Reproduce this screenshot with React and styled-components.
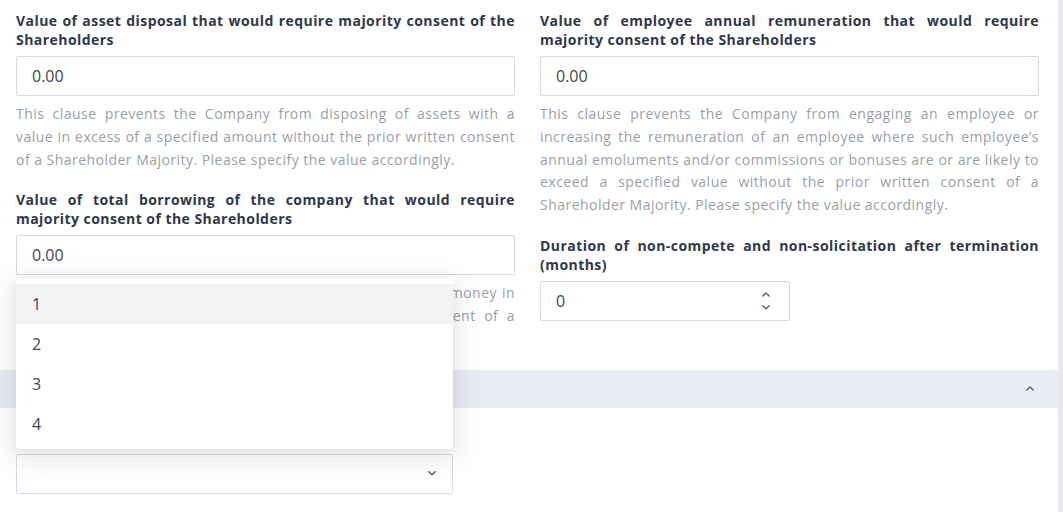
import React from 'react';
import styled, { createGlobalStyle } from 'styled-components';

const Global = createGlobalStyle`
  html, body { margin: 0; padding: 0; background: #fff; }
  body { font-family: "Open Sans", "Noto Sans", sans-serif; }
  * { box-sizing: border-box; }
`;

const Page = styled.div`
  display: flex;
  width: 1063px;
  height: 512px;
  overflow: hidden;
  background: #fff;
`;

const Main = styled.div`
  flex: 1;
  min-width: 0;
  display: flex;
  flex-direction: column;
`;

const ScrollTrack = styled.div`
  width: 5px;
  flex: none;
  background: #e6e8ed;
`;

const Grid = styled.div`
  display: grid;
  grid-template-columns: 499px 499px;
  column-gap: 25px;
  padding: 11px 19px 19px 16px;
  align-items: start;
`;

const Column = styled.div`
  display: flex;
  flex-direction: column;
  gap: 19px;
`;

const Field = styled.div`
  display: flex;
  flex-direction: column;
`;

const Label = styled.label`
  font-size: 14px;
  font-weight: 700;
  line-height: 19px;
  letter-spacing: 0.45px;
  color: #2f384a;
  text-align: justify;
  margin-bottom: 7px;
`;

const TextInput = styled.div`
  height: 40px;
  width: ${(p) => p.$width || '100%'};
  border: 1px solid #d3dbe6;
  border-radius: 2px;
  padding: 0 15px;
  display: flex;
  align-items: center;
  justify-content: space-between;
  font-size: 16px;
  color: #3f4654;
  background: #fff;
`;

const Help = styled.p`
  margin: 7px 0 0;
  font-size: 14px;
  line-height: 22.75px;
  letter-spacing: 0.47px;
  color: #9a9fa7;
  text-align: justify;
`;

const Spinner = styled.div`
  display: flex;
  flex-direction: column;
  align-items: center;
  gap: 8px;
  margin-right: 4px;
`;

const Band = styled.div`
  height: 38px;
  background: #e9ecf4;
  display: flex;
  align-items: center;
  justify-content: flex-end;
  padding-right: 24px;
`;

const Section = styled.div`
  padding: 46px 0 0 16px;
`;

const SelectWrap = styled.div`
  position: relative;
  width: 437px;
`;

const SelectBox = styled.div`
  height: 40px;
  border: 1px solid #d3dbe6;
  border-radius: 2px;
  display: flex;
  align-items: center;
  justify-content: flex-end;
  padding-right: 16px;
  background: #fff;
`;

const Menu = styled.ul`
  position: absolute;
  left: 0;
  right: 0;
  bottom: calc(100% + 5px);
  margin: 0;
  padding: 5px 0;
  list-style: none;
  background: #fff;
  border-radius: 4px;
  box-shadow: 0 6px 28px 6px rgba(0, 0, 0, 0.09), 0 2px 6px rgba(0, 0, 0, 0.06);
  z-index: 10;
`;

const Option = styled.li`
  height: 40px;
  padding-left: 16px;
  display: flex;
  align-items: center;
  font-size: 16px;
  color: #3f4654;
  background: ${(p) => (p.$active ? '#f3f3f3' : '#fff')};
`;

const Chevron = ({ up, size = 9 }) => (
  <svg width={size} height={size * 0.6} viewBox="0 0 10 6" fill="none">
    <path
      d={up ? 'M1 5 L5 1.2 L9 5' : 'M1 1 L5 4.8 L9 1'}
      stroke="#56637f"
      strokeWidth="1.8"
      strokeLinecap="round"
      strokeLinejoin="round"
    />
  </svg>
);

export default function App() {
  return (
    <>
      <Global />
      <Page>
        <Main>
          <Grid>
            <Column>
              <Field>
                <Label>Value of asset disposal that would require majority consent of the Shareholders</Label>
                <TextInput>0.00</TextInput>
                <Help>
                  This clause prevents the Company from disposing of assets with a value in excess of a specified
                  amount without the prior written consent of a Shareholder Majority. Please specify the value
                  accordingly.
                </Help>
              </Field>
              <Field>
                <Label>Value of total borrowing of the company that would require majority consent of the Shareholders</Label>
                <TextInput>0.00</TextInput>
                <Help>
                  This clause prevents the Company from borrowing or raising money in excess of a specified value
                  without the prior written consent of a Shareholder Majority. Please specify the value accordingly.
                </Help>
              </Field>
            </Column>
            <Column>
              <Field>
                <Label>Value of employee annual remuneration that would require majority consent of the Shareholders</Label>
                <TextInput>0.00</TextInput>
                <Help>
                  This clause prevents the Company from engaging an employee or increasing the remuneration of an
                  employee where such employee’s annual emoluments and/or commissions or bonuses are or are likely to
                  exceed a specified value without the prior written consent of a Shareholder Majority. Please
                  specify the value accordingly.
                </Help>
              </Field>
              <Field>
                <Label>Duration of non-compete and non-solicitation after termination (months)</Label>
                <TextInput $width="250px">
                  <span>0</span>
                  <Spinner>
                    <Chevron up size={8} />
                    <Chevron size={8} />
                  </Spinner>
                </TextInput>
              </Field>
            </Column>
          </Grid>
          <Band>
            <Chevron up size={8} />
          </Band>
          <Section>
            <SelectWrap>
              <Menu>
                <Option $active>1</Option>
                <Option>2</Option>
                <Option>3</Option>
                <Option>4</Option>
              </Menu>
              <SelectBox>
                <Chevron size={8} />
              </SelectBox>
            </SelectWrap>
          </Section>
        </Main>
        <ScrollTrack />
      </Page>
    </>
  );
}
